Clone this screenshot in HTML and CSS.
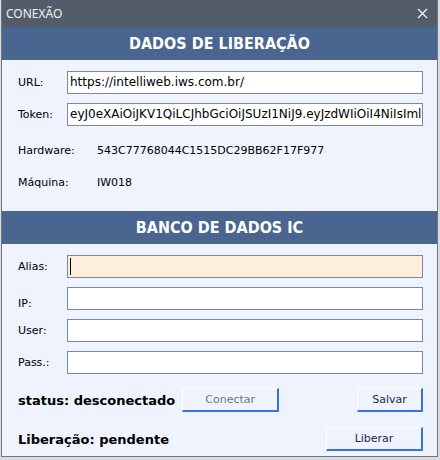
FILE: index.html
```html
<!DOCTYPE html>
<html lang="pt-BR">

<head>
  <meta charset="UTF-8">
  <meta name="viewport" content="width=device-width, initial-scale=1.0">
  <title>Conexão</title>

  <link rel="stylesheet" href="styles.css">
</head>

<body>
  <div class="window">
    <!-- barra de título -->
    <div class="titlebar">
      <span class="title">CONEXÃO</span>
      <svg class="close" width="11" height="11" viewBox="0 0 11 11">
        <path d="M1 1 L10 10 M10 1 L1 10" stroke="#f2f4f6" stroke-width="1.3" fill="none" />
      </svg>
    </div>

    <!-- dados de liberação -->
    <div class="band">DADOS DE LIBERAÇÃO</div>
    <div class="section liberacao">
      <div class="row">
        <label class="label">URL:</label>
        <div class="field">https://intelliweb.iws.com.br/</div>
      </div>
      <div class="row">
        <label class="label">Token:</label>
        <div class="field">eyJ0eXAiOiJKV1QiLCJhbGciOiJSUzI1NiJ9.eyJzdWIiOiI4NiIsImlzcyI6Imh0dHBzOi8vaW50ZWxsaXdlYi5pd3M</div>
      </div>
      <div class="info first">
        <span class="label wide">Hardware:</span>
        <span>543C77768044C1515DC29BB62F17F977</span>
      </div>
      <div class="info">
        <span class="label wide">Máquina:</span>
        <span>IW018</span>
      </div>
    </div>

    <!-- banco de dados -->
    <div class="band">BANCO DE DADOS IC</div>
    <div class="section banco">
      <div class="row">
        <label class="label">Alias:</label>
        <div class="field focus"><span class="caret"></span></div>
      </div>
      <div class="row">
        <label class="label low">IP:</label>
        <div class="field"></div>
      </div>
      <div class="row">
        <label class="label">User:</label>
        <div class="field"></div>
      </div>
      <div class="row">
        <label class="label">Pass.:</label>
        <div class="field"></div>
      </div>

      <div class="actions first">
        <span class="status">status: desconectado</span>
        <button class="btn disabled conectar">Conectar</button>
        <button class="btn salvar">Salvar</button>
      </div>
      <div class="actions">
        <span class="status">Liberação: pendente</span>
        <button class="btn liberar">Liberar</button>
      </div>
    </div>
  </div>
</body>

</html>
```

FILE: styles.css
```css
* {
  margin: 0;
  padding: 0;
  box-sizing: border-box;
}

body {
  width: 440px;
  height: 460px;
  background: #d9dde3;
  font-family: 'DejaVu Sans', sans-serif;
  font-size: 11px;
  color: #000;
  overflow: hidden;
}

/* janela */
.window {
  width: 437px;
  height: 457px;
  margin-left: 1px;
  border: 1px solid #6d7580;
  border-top: 0;
  background: #eef3fd;
  display: flex;
  flex-direction: column;
}

.titlebar {
  display: flex;
  align-items: center;
  justify-content: space-between;
  height: 27px;
  padding: 0 9px 1px 4px;
  background: #535d69;
  color: #eef1f4;
  font-family: 'Noto Sans', sans-serif;
  font-size: 12px;
}

.band {
  height: 33px;
  display: flex;
  justify-content: center;
  align-items: center;
  background: #4a6590;
  color: #fff;
  font-family: 'DejaVu Sans Condensed', 'DejaVu Sans', sans-serif;
  font-weight: bold;
  font-size: 16px;
  padding-bottom: 1px;
}

.section {
  display: flex;
  flex-direction: column;
  gap: 9px;
  padding: 11px 14px 0 16px;
}

.liberacao {
  padding-bottom: 19px;
  gap: 0;
}

.liberacao .row + .row {
  margin-top: 9px;
}

.row {
  display: flex;
  align-items: center;
}

.label {
  width: 49px;
  flex-shrink: 0;
}

.label.wide {
  width: 79px;
}

/* o rótulo IP fica um pouco abaixo */
.label.low {
  padding-top: 9px;
}

.field {
  flex: 1;
  height: 23px;
  border: 1px solid #7c88a6;
  background: #fff;
  padding: 0 2px;
  line-height: 21px;
  font-size: 12px;
  white-space: nowrap;
  overflow: hidden;
  display: flex;
  align-items: center;
}

.field.focus {
  background: #fdefdb;
}

.caret {
  width: 1px;
  height: 17px;
  background: #000;
}

.info {
  display: flex;
  align-items: center;
  height: 20px;
  margin-top: 12px;
}

.info.first {
  margin-top: 14px;
}

/* botões */
.actions {
  display: flex;
  align-items: center;
  height: 24px;
  margin-top: 6px;
}

.actions.first {
  margin-top: 5px;
}

.status {
  font-weight: bold;
  font-size: 13px;
}

.btn {
  height: 24px;
  background: #eef3fd;
  border-style: solid;
  border-width: 1px 2px 2px 1px;
  border-color: #fff #3c6ee6 #3c6ee6 #fff;
  font-family: 'DejaVu Sans', sans-serif;
  font-size: 11px;
  color: #1c2a4a;
}

.btn.disabled {
  color: #6f7784;
}

.conectar {
  width: 97px;
  margin-left: 7px;
}

.salvar {
  width: 66px;
  margin-left: auto;
}

.liberar {
  width: 97px;
  margin-left: auto;
}
```
